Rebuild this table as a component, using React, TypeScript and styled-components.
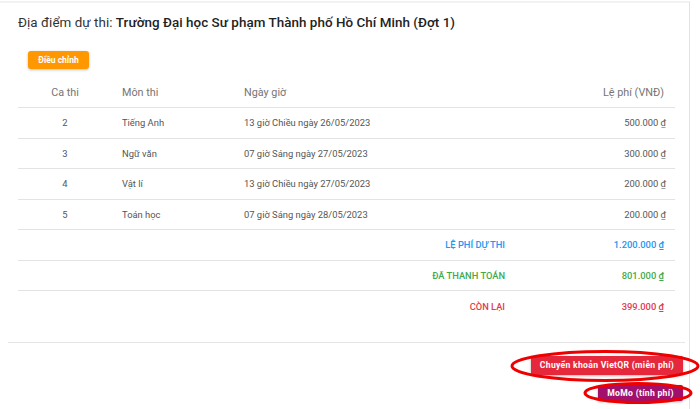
import React from "react";
import styled, { createGlobalStyle } from "styled-components";

const Global = createGlobalStyle`
  html, body { margin: 0; padding: 0; background: #fff; }
  body { font-family: Roboto, "Noto Sans", "Liberation Sans", sans-serif; }
`;

const Page = styled.div`
  width: 700px;
  height: 409px;
  overflow: hidden;
  padding-top: 1px;
  box-sizing: border-box;
`;

const Card = styled.div`
  width: 690px;
  height: 420px;
  box-sizing: border-box;
  border-top: 2px solid #f2f2f2;
  border-right: 1px solid #e2e2e2;
  display: flex;
  flex-direction: column;
`;

const Content = styled.div`
  padding: 12px 14px 0 18px;
`;

const Title = styled.h2`
  margin: 0;
  font-size: 13.4px;
  line-height: 16px;
  font-weight: 400;
  color: #333;
  letter-spacing: 0.05px;
  & b { font-weight: 500; color: #222; }
`;

const AdjustButton = styled.button`
  margin: 20px 0 0 10px;
  height: 18px;
  width: 61px;
  padding: 0;
  border: none;
  border-radius: 3px;
  background: #ff9800;
  color: #fff;
  font-family: inherit;
  font-size: 8.5px;
  font-weight: 700;
  box-shadow: 0 1px 3px rgba(0,0,0,0.25);
`;

const Table = styled.div`
  margin-top: 8px;
  width: 657px;
`;

const Row = styled.div<{ $head?: boolean; $last?: boolean }>`
  display: grid;
  grid-template-columns: 94px 122px 1fr 150px;
  align-items: center;
  height: ${(p) => (p.$head ? "31px" : "30.5px")};
  box-sizing: border-box;
  border-bottom: ${(p) => (p.$last ? "none" : "1px solid #e3e3e3")};
  font-size: ${(p) => (p.$head ? "10.8px" : "9.4px")};
  color: ${(p) => (p.$head ? "#757575" : "#555")};
`;

const Cell = styled.div<{ $align?: "left" | "center" | "right"; $pl?: number; $pr?: number }>`
  text-align: ${(p) => p.$align || "left"};
  padding-left: ${(p) => p.$pl || 0}px;
  padding-right: ${(p) => p.$pr || 0}px;
  white-space: nowrap;
`;

const SummaryLabel = styled.div<{ $color: string }>`
  grid-column: 1 / 4;
  text-align: right;
  padding-right: 20px;
  color: ${(p) => p.$color};
  font-weight: 500;
  font-size: 9.3px;
`;

const SummaryValue = styled.div<{ $color: string }>`
  text-align: right;
  padding-right: 11px;
  color: ${(p) => p.$color};
  font-weight: 500;
  font-size: 9.4px;
`;

const Divider = styled.div`
  margin: 20px 4px 0 8px;
  height: 1px;
  background: #e6e6e6;
`;

const Actions = styled.div`
  display: flex;
  flex-direction: column;
  align-items: flex-end;
  padding-right: 6px;
  padding-top: 13px;
  gap: 10px;
`;

const Marked = styled.div`
  position: relative;
  display: flex;
`;

const Ring = styled.svg`
  position: absolute;
  pointer-events: none;
  overflow: visible;
`;

const PayButton = styled.button<{ $bg: string; $w: number; $h: number }>`
  width: ${(p) => p.$w}px;
  height: ${(p) => p.$h}px;
  padding: 0;
  border: none;
  border-radius: 2px;
  background: ${(p) => p.$bg};
  color: #fff;
  font-family: inherit;
  font-size: 8.6px;
  font-weight: 700;
  letter-spacing: 0.3px;
  box-shadow: 0 1px 3px rgba(0,0,0,0.3);
`;

const rows = [
  { ca: "2", mon: "Tiếng Anh", ngay: "13 giờ Chiều ngày 26/05/2023", fee: "500.000 ₫" },
  { ca: "3", mon: "Ngữ văn", ngay: "07 giờ Sáng ngày 27/05/2023", fee: "300.000 ₫" },
  { ca: "4", mon: "Vật lí", ngay: "13 giờ Chiều ngày 27/05/2023", fee: "200.000 ₫" },
  { ca: "5", mon: "Toán học", ngay: "07 giờ Sáng ngày 28/05/2023", fee: "200.000 ₫" },
];

const summary = [
  { label: "LỆ PHÍ DỰ THI", value: "1.200.000 ₫", color: "#2196f3" },
  { label: "ĐÃ THANH TOÁN", value: "801.000 ₫", color: "#3faa4c" },
  { label: "CÒN LẠI", value: "399.000 ₫", color: "#e5394f" },
];

export default function App() {
  return (
    <Page>
      <Global />
      <Card>
        <Content>
          <Title>
            Địa điểm dự thi: <b>Trường Đại học Sư phạm Thành phố Hồ Chí Minh (Đợt 1)</b>
          </Title>
          <AdjustButton>Điều chỉnh</AdjustButton>
          <Table>
            <Row $head>
              <Cell $align="center">Ca thi</Cell>
              <Cell $pl={10}>Môn thi</Cell>
              <Cell $pl={10}>Ngày giờ</Cell>
              <Cell $align="right" $pr={11}>Lệ phí (VNĐ)</Cell>
            </Row>
            {rows.map((r) => (
              <Row key={r.ca}>
                <Cell $align="center">{r.ca}</Cell>
                <Cell $pl={10}>{r.mon}</Cell>
                <Cell $pl={10}>{r.ngay}</Cell>
                <Cell $align="right" $pr={9}>{r.fee}</Cell>
              </Row>
            ))}
            {summary.map((s, i) => (
              <Row key={s.label} $last={i === summary.length - 1}>
                <SummaryLabel $color={s.color}>{s.label}</SummaryLabel>
                <SummaryValue $color={s.color}>{s.value}</SummaryValue>
              </Row>
            ))}
          </Table>
        </Content>
        <Divider />
        <Actions>
          <Marked>
            <PayButton $bg="#e5283c" $w={152} $h={19}>Chuyển khoản VietQR (miễn phí)</PayButton>
            <Ring width="190" height="32" viewBox="0 0 190 32" style={{ left: -21, top: -6 }}>
              <ellipse cx="95" cy="16" rx="93" ry="14.5" fill="none" stroke="#ee0000" strokeWidth="3" />
            </Ring>
          </Marked>
          <Marked>
            <PayButton $bg="#a0106c" $w={85} $h={16}>MoMo (tính phí)</PayButton>
            <Ring width="110" height="22" viewBox="0 0 110 22" style={{ left: -15, top: -3 }}>
              <ellipse cx="55" cy="11" rx="53" ry="9.5" fill="none" stroke="#ee0000" strokeWidth="3" />
            </Ring>
          </Marked>
        </Actions>
      </Card>
    </Page>
  );
}
